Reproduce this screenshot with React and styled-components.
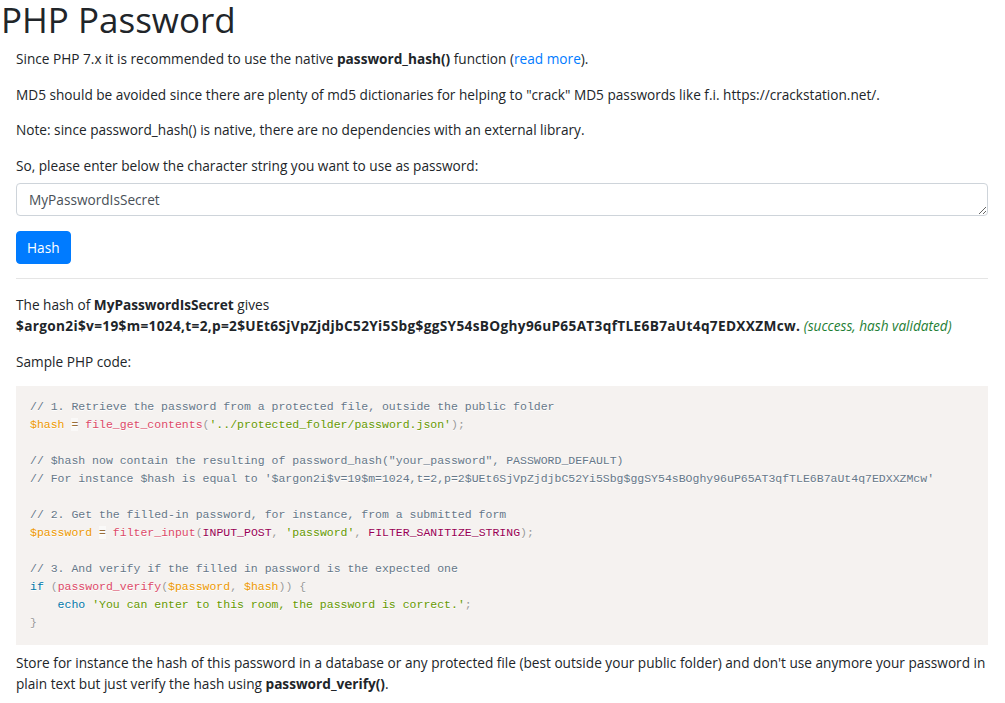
import React from "react";
import styled, { createGlobalStyle } from "styled-components";

const GlobalStyle = createGlobalStyle`
  body {
    margin: 0;
    background: #ffffff;
    color: #212529;
    font-family: "Open Sans", "Noto Sans", sans-serif;
    font-size: 13.65px;
    line-height: 21px;
  }
`;

const Page = styled.div`
  width: 1005px;
  box-sizing: border-box;
`;

const Title = styled.h1`
  margin: 0 0 8px 1px;
  font-size: 35px;
  line-height: 40px;
  font-weight: 500;
  color: #212529;
`;

const Content = styled.div`
  padding: 0 17px 0 16px;
`;

const Text = styled.p`
  margin: 0 0 ${(p) => p.$gap || 14.5}px;
`;

const Link = styled.a`
  color: #007bff;
  text-decoration: none;
`;

const Field = styled.textarea`
  display: block;
  width: 100%;
  height: 33px;
  box-sizing: border-box;
  margin: 0 0 15px;
  padding: 5px 12px;
  border: 1px solid #ced4da;
  border-radius: 4px;
  font-family: inherit;
  font-size: 13.65px;
  line-height: 21px;
  color: #495057;
  background: #ffffff;
`;

const Button = styled.button`
  display: block;
  height: 33px;
  padding: 0 10px;
  border: 1px solid #007bff;
  border-radius: 4px;
  background: #007bff;
  color: #ffffff;
  font-family: inherit;
  font-size: 13.65px;
  line-height: 21px;
`;

const Rule = styled.hr`
  margin: 14px 0 15px;
  border: 0;
  border-top: 1px solid rgba(0, 0, 0, 0.1);
`;

const HashValue = styled.strong`
  letter-spacing: 0.33px;
`;

const Success = styled.em`
  color: #1e7e34;
`;

const CodeBlock = styled.pre`
  margin: 0 0 7px;
  padding: 12px 14px 13px;
  background: #f5f2f0;
  font-family: "Liberation Mono", "DejaVu Sans Mono", monospace;
  font-size: 11.5px;
  line-height: 18px;
  color: #000000;
  text-shadow: 0 1px #ffffff;
  overflow: hidden;
`;

const CodeLine = styled.div`
  height: 18px;
  white-space: pre;
`;

const tokenColors = {
  comment: "#667788",
  punctuation: "#999999",
  variable: "#ee9900",
  function: "#dd4a68",
  string: "#669900",
  keyword: "#0077aa",
  constant: "#990055",
  operator: "#9a6e3a",
};

const Token = styled.span`
  color: ${(p) => tokenColors[p.$kind] || "#000000"};
  background: ${(p) =>
    p.$kind === "operator" ? "rgba(255, 255, 255, 0.5)" : "transparent"};
`;

const HASH =
  "$argon2i$v=19$m=1024,t=2,p=2$UEt6SjVpZjdjbC52Yi5Sbg$ggSY54sBOghy96uP65AT3qfTLE6B7aUt4q7EDXXZMcw";

const code = [
  [["comment", "// 1. Retrieve the password from a protected file, outside the public folder"]],
  [
    ["variable", "$hash"], " ", ["operator", "="], " ",
    ["function", "file_get_contents"], ["punctuation", "("],
    ["string", "'../protected_folder/password.json'"],
    ["punctuation", ")"], ["punctuation", ";"],
  ],
  [],
  [["comment", '// $hash now contain the resulting of password_hash("your_password", PASSWORD_DEFAULT)']],
  [["comment", "// For instance $hash is equal to '" + HASH + "'"]],
  [],
  [["comment", "// 2. Get the filled-in password, for instance, from a submitted form"]],
  [
    ["variable", "$password"], " ", ["operator", "="], " ",
    ["function", "filter_input"], ["punctuation", "("],
    ["constant", "INPUT_POST"], ["punctuation", ","], " ",
    ["string", "'password'"], ["punctuation", ","], " ",
    ["constant", "FILTER_SANITIZE_STRING"], ["punctuation", ")"], ["punctuation", ";"],
  ],
  [],
  [["comment", "// 3. And verify if the filled in password is the expected one"]],
  [
    ["keyword", "if"], " ", ["punctuation", "("],
    ["function", "password_verify"], ["punctuation", "("],
    ["variable", "$password"], ["punctuation", ","], " ",
    ["variable", "$hash"], ["punctuation", "))"], " ", ["punctuation", "{"],
  ],
  [
    "    ", ["keyword", "echo"], " ",
    ["string", "'You can enter to this room, the password is correct.'"],
    ["punctuation", ";"],
  ],
  [["punctuation", "}"]],
];

const App = () => {
  return (
    <Page>
      <GlobalStyle />
      <Title>PHP Password</Title>
      <Content>
        <Text>
          Since PHP 7.x it is recommended to use the native{" "}
          <strong>password_hash()</strong> function (
          <Link href="#">read more</Link>).
        </Text>
        <Text>
          MD5 should be avoided since there are plenty of md5 dictionaries for
          helping to "crack" MD5 passwords like f.i. https://crackstation.net/.
        </Text>
        <Text>
          Note: since password_hash() is native, there are no dependencies with
          an external library.
        </Text>
        <Text $gap={7.5}>
          So, please enter below the character string you want to use as
          password:
        </Text>
        <Field rows={1} defaultValue="MyPasswordIsSecret" />
        <Button>Hash</Button>
        <Rule />
        <Text $gap={15}>
          The hash of <strong>MyPasswordIsSecret</strong> gives
          <br />
          <HashValue>{HASH}.</HashValue>{" "}
          <Success>(success, hash validated)</Success>
        </Text>
        <Text $gap={14}>Sample PHP code:</Text>
        <CodeBlock>
          {code.map((line, i) => (
            <CodeLine key={i}>
              {line.map((tok, j) =>
                typeof tok === "string" ? (
                  tok
                ) : (
                  <Token key={j} $kind={tok[0]}>
                    {tok[1]}
                  </Token>
                )
              )}
            </CodeLine>
          ))}
        </CodeBlock>
        <Text>
          Store for instance the hash of this password in a database or any
          protected file (best outside your public folder) and don't use
          anymore your password in plain text but just verify the hash using{" "}
          <strong>password_verify()</strong>.
        </Text>
      </Content>
    </Page>
  );
};

export default App;
